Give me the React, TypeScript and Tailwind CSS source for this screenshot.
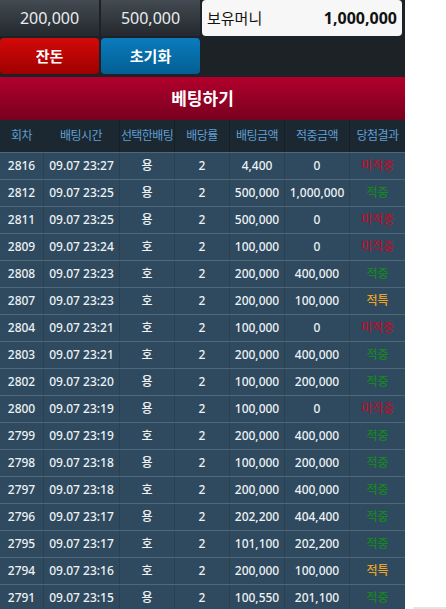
const rows: [string, string, string, string, string, string, string][] = [
  ['2816', '09.07 23:27', '용', '2', '4,400', '0', '미적중'],
  ['2812', '09.07 23:25', '용', '2', '500,000', '1,000,000', '적중'],
  ['2811', '09.07 23:25', '용', '2', '500,000', '0', '미적중'],
  ['2809', '09.07 23:24', '호', '2', '100,000', '0', '미적중'],
  ['2808', '09.07 23:23', '호', '2', '200,000', '400,000', '적중'],
  ['2807', '09.07 23:23', '호', '2', '200,000', '100,000', '적특'],
  ['2804', '09.07 23:21', '호', '2', '100,000', '0', '미적중'],
  ['2803', '09.07 23:21', '호', '2', '200,000', '400,000', '적중'],
  ['2802', '09.07 23:20', '용', '2', '100,000', '200,000', '적중'],
  ['2800', '09.07 23:19', '용', '2', '100,000', '0', '미적중'],
  ['2799', '09.07 23:19', '호', '2', '200,000', '400,000', '적중'],
  ['2798', '09.07 23:18', '용', '2', '100,000', '200,000', '적중'],
  ['2797', '09.07 23:18', '호', '2', '200,000', '400,000', '적중'],
  ['2796', '09.07 23:17', '용', '2', '202,200', '404,400', '적중'],
  ['2795', '09.07 23:17', '호', '2', '101,100', '202,200', '적중'],
  ['2794', '09.07 23:16', '호', '2', '200,000', '100,000', '적특'],
  ['2791', '09.07 23:15', '용', '2', '100,550', '201,100', '적중'],
];

const headers = ['회차', '배팅시간', '선택한배팅', '배당률', '배팅금액', '적중금액', '당첨결과'];
const widths = ['w-[43px]', 'w-[76px]', 'w-[55px]', 'w-[55px]', 'w-[55px]', 'w-[65px]', 'w-[56px]'];

const resultColor = (r: string) => {
  if (r === '미적중') return 'text-[#b3122c]';
  if (r === '적특') return 'text-[#eea321]';
  return 'text-[#16861f]';
};

export default function App() {
  return (
    <div
      className="flex h-[609px] overflow-hidden bg-white"
      style={{ fontFamily: '"Noto Sans", "Noto Sans CJK KR", sans-serif' }}
    >
      <div className="w-[405px] shrink-0 bg-[#1d2226]">
        {/* 금액 버튼 / 보유머니 */}
        <div className="flex flex-col gap-[2px] pr-[3px] pb-[3px]">
          <div className="flex h-[36px] gap-[2px]">
            <button className="w-[99px] bg-gradient-to-b from-[#434a51] to-[#23292e] text-[16px] text-[#e8ecef]">
              200,000
            </button>
            <button className="w-[99px] bg-gradient-to-b from-[#434a51] to-[#23292e] text-[16px] text-[#e8ecef]">
              500,000
            </button>
            <div className="flex flex-1 items-center justify-between rounded-sm bg-[#f7f7f7] px-[5px] text-[15px] text-[#111]">
              <span>보유머니</span>
              <span className="text-[16px] font-bold">1,000,000</span>
            </div>
          </div>
          <div className="flex h-[36px] gap-[2px]">
            <button className="w-[99px] rounded-sm bg-gradient-to-b from-[#d30a0a] to-[#a00000] text-[15px] font-bold text-white">
              잔돈
            </button>
            <button className="w-[99px] rounded-sm bg-gradient-to-b from-[#0b7bbd] to-[#045f93] text-[15px] font-bold text-white">
              초기화
            </button>
          </div>
        </div>

        {/* 타이틀 */}
        <div className="flex h-[43px] items-center justify-center bg-gradient-to-b from-[#b2002c] to-[#78001f] text-[17px] font-bold text-white">
          베팅하기
        </div>

        {/* 헤더 */}
        <div className="flex h-[32px] bg-[#1b2731] text-[12px] tracking-[-0.6px] whitespace-nowrap text-[#5f9fd3]">
          {headers.map((h, i) => (
            <div
              key={h}
              className={`${widths[i]} flex items-center justify-center ${i > 1 ? 'border-l border-[#13202a]' : ''}`}
            >
              {h}
            </div>
          ))}
        </div>

        {/* 내역 */}
        {rows.map((r) => (
          <div
            key={r[0]}
            className="flex h-[27px] border-t border-[#4f677b] bg-[#2f4a5f] text-[12px] font-medium whitespace-nowrap text-[#eef2f5]"
          >
            {r.map((c, i) => (
              <div
                key={i}
                className={`${widths[i]} flex items-center justify-center ${i > 0 ? 'border-l border-[#28404f]' : ''} ${i === 6 ? resultColor(c) : ''}`}
              >
                {c}
              </div>
            ))}
          </div>
        ))}
      </div>
      <div className="flex flex-1 flex-col justify-end">
        <div className="ml-[8px] h-[2px] bg-[#e4e4e4]" />
      </div>
    </div>
  );
}
